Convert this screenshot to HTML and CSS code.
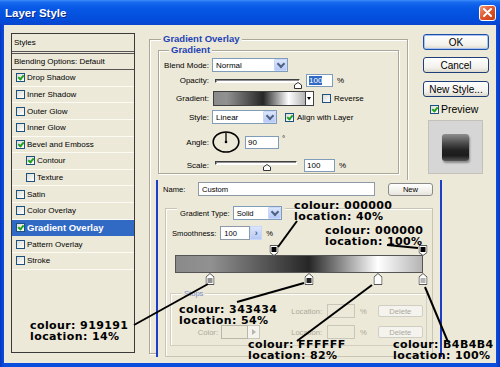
FILE: index.html
```html
<!DOCTYPE html>
<html lang="en">
<head>
<meta charset="utf-8">
<title>Layer Style</title>
<link rel="stylesheet" href="styles.css">
</head>
<body>
<div class="window">
  <div class="titlebar">
    <span class="title">Layer Style</span>
    <span class="close"><svg width="9" height="9" viewBox="0 0 9 9"><path d="M1 1L8 8M8 1L1 8" stroke="#fff" stroke-width="2" stroke-linecap="round"/></svg></span>
  </div>
  <div class="frame">
    <div class="client">
      <div class="styles">
        <div class="sp-head">Styles</div>
        <div class="sp-blend">Blending Options: Default</div>
        <div class="sp-item"><span class="cb on"></span>Drop Shadow</div>
        <div class="sp-item"><span class="cb"></span>Inner Shadow</div>
        <div class="sp-item"><span class="cb"></span>Outer Glow</div>
        <div class="sp-item"><span class="cb"></span>Inner Glow</div>
        <div class="sp-item"><span class="cb on"></span>Bevel and Emboss</div>
        <div class="sp-item sub"><span class="cb on"></span>Contour</div>
        <div class="sp-item sub"><span class="cb"></span>Texture</div>
        <div class="sp-item"><span class="cb"></span>Satin</div>
        <div class="sp-item"><span class="cb"></span>Color Overlay</div>
        <div class="sp-item selected"><span class="cb on"></span>Gradient Overlay</div>
        <div class="sp-item"><span class="cb"></span>Pattern Overlay</div>
        <div class="sp-item"><span class="cb"></span>Stroke</div>
      </div>

      <div class="go">
        <div class="legend go-legend">Gradient Overlay</div>
        <div class="gi">
          <div class="legend gi-legend">Gradient</div>
          <div class="row r-blend"><span class="lbl">Blend Mode:</span><span class="sel w-blend"><span>Normal</span><span class="arr"></span></span></div>
          <div class="row r-op"><span class="lbl">Opacity:</span><span class="slider s-op"><span class="track"></span><svg class="thumb" width="8" height="7" viewBox="0 0 8 7"><path d="M0.5 6.5V3L4 0.5L7.5 3V6.5Z" fill="#fff" stroke="#333"/></svg></span><span class="inp w-op"><span class="hl">100</span></span><span class="pct">%</span></div>
          <div class="row r-grad"><span class="lbl">Gradient:</span><span class="gswatch"></span><span class="gdrop"></span><span class="cb cb-rev"></span><span class="cblbl">Reverse</span></div>
          <div class="row r-style"><span class="lbl">Style:</span><span class="sel w-style"><span>Linear</span><span class="arr"></span></span><span class="cb on cb-align"></span><span class="cblbl">Align with Layer</span></div>
          <div class="row r-angle"><span class="lbl">Angle:</span><svg class="dial" width="28" height="22" viewBox="0 0 28 22"><ellipse cx="14" cy="11" rx="12.8" ry="10" fill="none" stroke="#000" stroke-width="1.6"/><path d="M14 11V1.5" stroke="#000" stroke-width="1.3"/><circle cx="14" cy="11" r="1.3"/></svg><span class="inp w-angle">90</span><span class="deg">°</span></div>
          <div class="row r-scale"><span class="lbl">Scale:</span><span class="slider s-sc"><span class="track"></span><svg class="thumb" width="8" height="7" viewBox="0 0 8 7"><path d="M0.5 6.5V3L4 0.5L7.5 3V6.5Z" fill="#fff" stroke="#333"/></svg></span><span class="inp w-sc">100</span><span class="pct">%</span></div>
        </div>
      </div>

      <div class="side">
        <div class="btn b-ok">OK</div>
        <div class="btn b-cancel">Cancel</div>
        <div class="btn b-new">New Style...</div>
        <div class="prev-row"><span class="cb on"></span><span class="prev-lbl">Preview</span></div>
        <div class="preview"><div class="pv-square"></div></div>
      </div>

      <div class="editor">
        <div class="nrow"><span class="n-lbl">Name:</span><span class="e-inp n-inp">Custom</span><span class="e-btn n-new">New</span></div>
        <div class="gtbox">
          <div class="gt-head"><span>Gradient Type:</span><span class="sel e-sel"><span>Solid</span><span class="arr"></span></span></div>
          <div class="smooth"><span>Smoothness:</span><span class="e-inp sm-inp">100</span><span class="sm-arr">›</span><span class="pct">%</span></div>
          <div class="gbar">
            <div class="stops-top">
              <svg class="stop" style="left:40%" width="9" height="11" viewBox="0 0 9 11"><path d="M0.5 0.5H8.5V7.5L4.5 10.5L0.5 7.5Z" fill="#fff" stroke="#555"/><rect x="2" y="2" width="5" height="5" fill="#000"/></svg>
              <svg class="stop" style="left:100%" width="9" height="11" viewBox="0 0 9 11"><path d="M0.5 0.5H8.5V7.5L4.5 10.5L0.5 7.5Z" fill="#fff" stroke="#555"/><rect x="2" y="2" width="5" height="5" fill="#000"/></svg>
            </div>
            <div class="bar"></div>
            <div class="stops-bottom">
              <svg class="stop" style="left:14%" width="9" height="12" viewBox="0 0 9 12"><path d="M0.5 11.5H8.5V4L4.5 0.5L0.5 4Z" fill="#fff" stroke="#555"/><rect x="2" y="5" width="5" height="5" fill="#919191"/></svg>
              <svg class="stop" style="left:54%" width="9" height="12" viewBox="0 0 9 12"><path d="M0.5 11.5H8.5V4L4.5 0.5L0.5 4Z" fill="#fff" stroke="#555"/><rect x="2" y="5" width="5" height="5" fill="#222"/></svg>
              <svg class="stop" style="left:82%" width="9" height="12" viewBox="0 0 9 12"><path d="M0.5 11.5H8.5V4L4.5 0.5L0.5 4Z" fill="#fff" stroke="#555"/><rect x="2" y="5" width="5" height="5" fill="#fff"/></svg>
              <svg class="stop" style="left:100%" width="9" height="12" viewBox="0 0 9 12"><path d="M0.5 11.5H8.5V4L4.5 0.5L0.5 4Z" fill="#fff" stroke="#555"/><rect x="2" y="5" width="5" height="5" fill="#b4b4b4"/></svg>
            </div>
          </div>
          <div class="stopsbox">
            <div class="legend st-legend">Stops</div>
            <div class="srow r1"><span class="s-spacer"></span><span class="s-loc">Location:</span><span class="s-inp"></span><span class="s-pct">%</span><span class="s-del">Delete</span></div>
            <div class="srow r2"><span class="s-col">Color:</span><span class="s-sw"></span><span class="s-arr"><svg width="4" height="6" viewBox="0 0 4 6"><path d="M0 0L4 3L0 6Z" fill="#b8b6a8"/></svg></span><span class="s-loc">Location:</span><span class="s-inp"></span><span class="s-pct">%</span><span class="s-del">Delete</span></div>
          </div>
        </div>
      </div>
    </div>
  </div>

  <svg class="lines" width="500" height="367" viewBox="0 0 500 367">
    <g stroke="#000" stroke-width="2" fill="none">
      <path d="M297 221L278 247"/>
      <path d="M387 245L418 248"/>
      <path d="M134 325L208 284"/>
      <path d="M237 302L304 283"/>
      <path d="M297 341L372 285"/>
      <path d="M425 287L448 342"/>
    </g>
  </svg>
  <div class="ann a40">colour: 000000<br>location: 40%</div>
  <div class="ann a100t">colour: 000000<br>location: 100%</div>
  <div class="ann a14">colour: 919191<br>location: 14%</div>
  <div class="ann a54">colour: 343434<br>location: 54%</div>
  <div class="ann a82">colour: FFFFFF<br>location: 82%</div>
  <div class="ann a100b">colour: B4B4B4<br>location: 100%</div>
</div>
</body>
</html>
```

FILE: styles.css
```css
* { box-sizing: border-box; }
html, body { margin: 0; padding: 0; }
body {
  width: 500px; height: 367px; overflow: hidden;
  font-family: "Liberation Sans", Arial, sans-serif;
  font-size: 8px; color: #000; background: #0a46d8;
}
.window {
  position: relative; width: 500px; height: 367px;
  display: flex; flex-direction: column;
  background: linear-gradient(90deg, #0838c0 0, #0a4ede 4px, #0a4ede 496px, #0838c0 500px);
}
.titlebar {
  height: 25px; flex: none;
  display: flex; align-items: center; justify-content: space-between;
  padding: 0 4px 0 5px;
  background: linear-gradient(#3d8ffa 0, #1a6cf0 2px, #0b5ce8 6px, #0656e4 40%, #034bd8 85%, #0a44cc 100%);
}
.title { color: #fff; font-weight: bold; font-size: 11.5px; text-shadow: 1px 1px 0 #0a2a8a; margin-top: 1px; }
.close {
  width: 17px; height: 16px; border: 1px solid #fff; border-radius: 3px;
  background: linear-gradient(135deg, #f29c7c, #e0582e 45%, #c63c16);
  display: flex; align-items: center; justify-content: center;
}
.frame { flex: 1; padding: 0 4px 4px; }
.client {
  height: 338px; background: #ece9d8;
  display: grid;
  grid-template-columns: 124px 262px 66px;
  grid-template-rows: 144px 1fr;
  column-gap: 13px;
  padding: 8px 7px 0;
}

/* Styles list */
.styles {
  grid-column: 1; grid-row: 1 / span 2; align-self: start;
  height: 320px; border: 1px solid #3a3a3a;
}
.sp-head {
  height: 18px; padding-left: 2px; display: flex; align-items: center;
  border-bottom: 1px solid #555;
}
.sp-blend {
  margin-top: 1px; height: 17px; padding-left: 2px;
  display: flex; align-items: center;
  border-top: 1px solid #555; border-bottom: 1px solid #555;
}
.sp-item {
  height: 16.64px; display: flex; align-items: center; padding-left: 4px;
  border-bottom: 1px solid #fbfaf3;
}
.sp-item .cb { margin-right: 2px; }
.sp-item.sub { padding-left: 14px; }
.sp-item.selected { background: #316ac5; color: #fff; font-weight: bold; font-size: 9.5px; border-bottom-color: #316ac5; }

.cb {
  position: relative; flex: none;
  width: 9px; height: 9px; border: 1px solid #1c5180;
  background: linear-gradient(135deg, #dcdcd4, #fff);
}
.cb.on::after {
  content: ""; position: absolute; left: 2px; top: 0px;
  width: 2px; height: 4px;
  border: solid #21a121; border-width: 0 2px 2px 0;
  transform: rotate(40deg);
}

/* group boxes */
.go {
  grid-column: 2; grid-row: 1 / span 2; align-self: start;
  margin: 6px 0 0 1px; width: 259px; height: 315px;
  border: 1px solid #aca899; box-shadow: inset 1px 1px 0 #fff, 1px 1px 0 #fff;
}
.legend {
  display: block; width: max-content;
  background: #ece9d8; padding: 0 2px;
  line-height: 12px;
}
.go-legend, .gi-legend { color: #1f43b5; font-weight: bold; font-size: 9.5px; }
.go-legend { margin: -7px 0 0 11px; }
.gi {
  margin: 5px 0 0 8px; width: 241px; height: 124px;
  border: 1px solid #aca899; box-shadow: inset 1px 1px 0 #fff, 1px 1px 0 #fff;
}
.gi-legend { margin: -7px 0 0 10px; }

.row { display: flex; align-items: center; height: 14px; }
.lbl { width: 50px; text-align: right; flex: none; }
.r-blend { margin-top: 2px; }
.r-op { margin-top: 1px; }
.r-grad { margin-top: 4px; height: 15px; }
.r-style { margin-top: 4px; }
.r-angle { margin-top: 7px; height: 22px; }
.r-scale { margin-top: 5px; }

.sel {
  height: 14px; border: 1px solid #7f9db9; background: #fff;
  display: flex; align-items: center; justify-content: space-between;
  padding-left: 3px; margin-left: 3px; flex: none;
}
.w-blend { width: 76px; }
.w-style { width: 65px; }
.arr {
  position: relative;
  width: 13px; height: 12px; border: 1px solid #c9d7fb; border-radius: 1px;
  background: linear-gradient(#dbe5fc, #b6c9f5);
}
.arr::after {
  content: ""; position: absolute; left: 3px; top: 1px;
  width: 4px; height: 4px;
  border: solid #4d6185; border-width: 0 2px 2px 0;
  transform: rotate(45deg);
}

.slider { position: relative; height: 14px; flex: none; margin-left: 6px; }
.track {
  display: block; height: 4px;
  border: 1px solid; border-color: #404040 #fff #fff #404040;
  background: #fff; box-shadow: inset 1px 1px 0 #909090;
}
.thumb { position: absolute; }
.s-op { width: 85px; }
.s-op .track { margin-top: 6px; }
.s-op .thumb { top: 9px; left: 79px; }
.s-sc { width: 82px; }
.s-sc .track { margin-top: 3px; }
.s-sc .thumb { top: 6px; left: 48px; }

.inp {
  height: 13px; border: 1px solid #7f9db9; background: #fff;
  padding-left: 2px; line-height: 11px; flex: none;
}
.hl { background: #316ac5; color: #fff; }
.w-op { width: 27px; margin-left: 6px; }
.w-sc { width: 31px; margin-left: 7px; }
.w-angle { width: 34px; margin-left: 5px; }
.pct { margin-left: 4px; }
.deg { margin-left: 3px; align-self: flex-start; margin-top: 3px; }
.dial { margin-left: 3px; flex: none; }

.gswatch {
  margin-left: 4px; width: 93px; height: 15px; border: 1px solid #404040; flex: none;
  background: linear-gradient(90deg, #8a8a8a 0%, #919191 14%, #262626 54%, #fff 82%, #b4b4b4 100%);
}
.gdrop {
  position: relative; width: 8px; height: 15px; flex: none;
  border: 1px solid #404040; border-left: 0; background: #fff;
}
.gdrop::after {
  content: ""; position: absolute; left: 1px; top: 5px;
  border-left: 2.5px solid transparent; border-right: 2.5px solid transparent;
  border-top: 3px solid #000;
}
.cb-rev { margin-left: 8px; }
.cb-align { margin-left: 8px; }
.cblbl { margin-left: 3px; }

/* right column */
.side { grid-column: 3; grid-row: 1; display: flex; flex-direction: column; }
.btn {
  height: 16px; border: 1px solid #1f3f78; border-radius: 3px;
  background: linear-gradient(#fff, #f2f1ec 70%, #dcd8cc);
  font-size: 10px; display: flex; align-items: center; justify-content: center;
}
.b-ok { margin-top: 1px; border-color: #1d4fa8; box-shadow: inset 0 0 0 1px #a9c2f0; }
.b-cancel { margin-top: 7px; }
.b-new { margin-top: 8px; }
.prev-row { margin-top: 7px; height: 10px; display: flex; align-items: center; padding-left: 7px; }
.prev-lbl { margin-left: 2px; font-size: 10.5px; }
.preview {
  margin: 6px 0 0 5px; width: 55px; height: 54px;
  background: #d6d6d6; border: 1px solid #c4c2b8;
  display: flex; align-items: center; justify-content: center;
}
.pv-square {
  width: 27px; height: 27px; border-radius: 3px;
  background: linear-gradient(#8e8e8e 0%, #4a4a4a 35%, #222 60%, #1c1c1c 80%, #555 100%);
  box-shadow: 1px 2px 2px rgba(0,0,0,0.35);
}

/* gradient editor */
.editor {
  grid-column: 2 / span 2; grid-row: 2;
  position: relative;
  margin: 3px 0 0 8px; width: 286px; height: 177px;
  border-left: 2px solid #1d3fc8; border-right: 2px solid #1d3fc8;
  background: #ece9d8;
  padding: 2px 0 0 5px;
  font-size: 7.6px;
}
.nrow { display: flex; align-items: center; height: 14px; }
.n-lbl { width: 35px; flex: none; }
.e-inp {
  border: 1px solid #8e9aa8; background: #fff; height: 14px;
  display: flex; align-items: center; padding-left: 3px; flex: none;
}
.n-inp { width: 177px; }
.e-btn {
  height: 13px; border: 1px solid #8a8a8a; border-radius: 3px;
  background: linear-gradient(#fff, #e8e6dc);
  display: flex; align-items: center; justify-content: center; flex: none;
}
.n-new { margin-left: 13px; width: 45px; }

.gtbox {
  margin: 12px 0 0 2px; width: 268px; height: 149px;
  border: 1px solid #c8c5b5; box-shadow: inset 1px 1px 0 #fff;
}
.gt-head {
  display: flex; align-items: center; width: max-content;
  margin: -3px 0 0 11px; padding: 0 3px; background: #ece9d8; height: 14px;
}
.e-sel { width: 49px; }
.smooth { display: flex; align-items: center; height: 14px; margin: 6px 0 0 6px; }
.sm-inp { width: 30px; margin-left: 4px; }
.sm-arr {
  width: 12px; height: 14px; flex: none;
  background: linear-gradient(#dbe5fc, #b6c9f5); border: 1px solid #c9d7fb;
  display: flex; align-items: center; justify-content: center;
  font-size: 9px; font-weight: bold; color: #4d6185;
}

.gbar { margin: 5px 0 0 9px; width: 248px; }
.stops-top { position: relative; height: 10px; }
.stops-bottom { position: relative; height: 12px; }
.stop { position: absolute; top: 0; transform: translateX(-50%); }
.bar {
  height: 18px; border: 1px solid #555;
  background: linear-gradient(90deg, #8a8a8a 0%, #919191 14%, #262626 54%, #fff 82%, #b4b4b4 100%);
}

.stopsbox {
  margin: 8px 0 0 4px; width: 257px; height: 53px;
  border: 1px solid #d2cfc0; box-shadow: inset 1px 1px 0 #fff;
  color: #aca899;
}
.st-legend { margin: -6px 0 0 11px; color: #7b8fc8; }
.srow { display: flex; align-items: center; height: 14px; }
.r1 { margin-top: 4px; }
.r2 { margin-top: 7px; }
.s-spacer { width: 89px; flex: none; }
.s-col { width: 47px; text-align: right; flex: none; }
.s-sw { margin-left: 3px; width: 27px; height: 14px; border: 1px solid #b9b7aa; flex: none; }
.s-arr {
  width: 12px; height: 14px; border: 1px solid #c9c7ba; border-left: 0; flex: none;
  display: flex; align-items: center; justify-content: center; background: #f4f3ee;
}
.s-loc { width: 62px; text-align: right; flex: none; }
.s-inp { margin-left: 5px; width: 28px; height: 14px; border: 1px solid #c9c7ba; flex: none; }
.s-pct { margin-left: 5px; }
.s-del {
  margin-left: 11px; width: 45px; height: 12px; flex: none;
  border: 1px solid #d0cec2; border-radius: 2px; background: #f4f3ee;
  display: flex; align-items: center; justify-content: center;
}

/* annotations */
.lines { position: absolute; left: 0; top: 0; pointer-events: none; }
.ann {
  position: absolute;
  font-family: "DejaVu Sans", sans-serif; font-weight: bold;
  font-size: 11px; line-height: 11px; letter-spacing: 0.4px;
  white-space: nowrap; color: #000;
}
.a40 { left: 294px; top: 200px; }
.a100t { left: 325px; top: 225px; }
.a14 { left: 30px; top: 320px; }
.a54 { left: 179px; top: 304px; }
.a82 { left: 248px; top: 339px; }
.a100b { left: 393px; top: 339px; }
```
